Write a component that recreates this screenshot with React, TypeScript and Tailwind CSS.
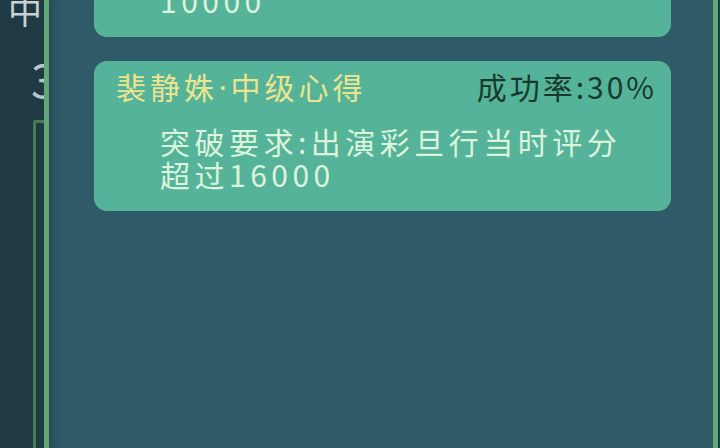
import React from "react";

const font = { fontFamily: '"Noto Sans CJK SC", "Noto Sans", sans-serif' };

function Card({ name, level, rate, lines }: { name: string; level: string; rate: string; lines: string[] }) {
  return (
    <div className="h-[150px] w-[577px] flex-none overflow-hidden rounded-[13px] bg-[#55b399] pt-[8px]">
      <div className="flex items-start justify-between pl-[22px] pr-[14px] text-[30px] leading-[34px]">
        <span className="whitespace-nowrap tracking-[4px] text-[#ece48e]">
          {name}
          <span className="tracking-[3px]" style={{ fontFamily: '"DejaVu Sans", sans-serif' }}>·</span>
          {level}
        </span>
        <span className="whitespace-nowrap tracking-[3px] text-[#173a2c]">{rate}</span>
      </div>
      <div className="mt-[19px] pl-[66px] text-[30px] leading-[33px] tracking-[4.5px] text-[#dcf3dc]">
        {lines.map((l, i) => (
          <div key={i} className="whitespace-nowrap">{l}</div>
        ))}
      </div>
    </div>
  );
}

export default function App() {
  return (
    <div className="relative h-[448px] w-[720px] overflow-hidden bg-[#203a44]" style={font}>
      {/* underlying screen */}
      <div className="flex flex-col pl-[8px]">
        <div className="-mt-[8px] text-[34px] leading-[36px] text-[#c9d2d2]">中</div>
        <div className="mt-[26px] pl-[23px] text-[46px] leading-[48px] text-[#b9c6c6]">3</div>
        <div className="ml-[25px] mt-[18px] h-[400px] w-[200px] rounded-[2px] border-[3px] border-[#4a7c54]" />
      </div>

      {/* overlay panel */}
      <div className="absolute bottom-0 left-[44px] top-0 w-[674px] border-x-[5px] border-[#62a878] bg-[#2f5a68] shadow-[inset_8px_0_8px_-6px_rgba(20,50,60,0.6)]">
        <div className="-mt-[113px] flex flex-col gap-[24px] pl-[45px]">
          <Card name="裴静姝" level="初级心得" rate="成功率:50%" lines={["突破要求:出演彩旦行当时评分", "10000"]} />
          <Card name="裴静姝" level="中级心得" rate="成功率:30%" lines={["突破要求:出演彩旦行当时评分", "超过16000"]} />
        </div>
      </div>
    </div>
  );
}
